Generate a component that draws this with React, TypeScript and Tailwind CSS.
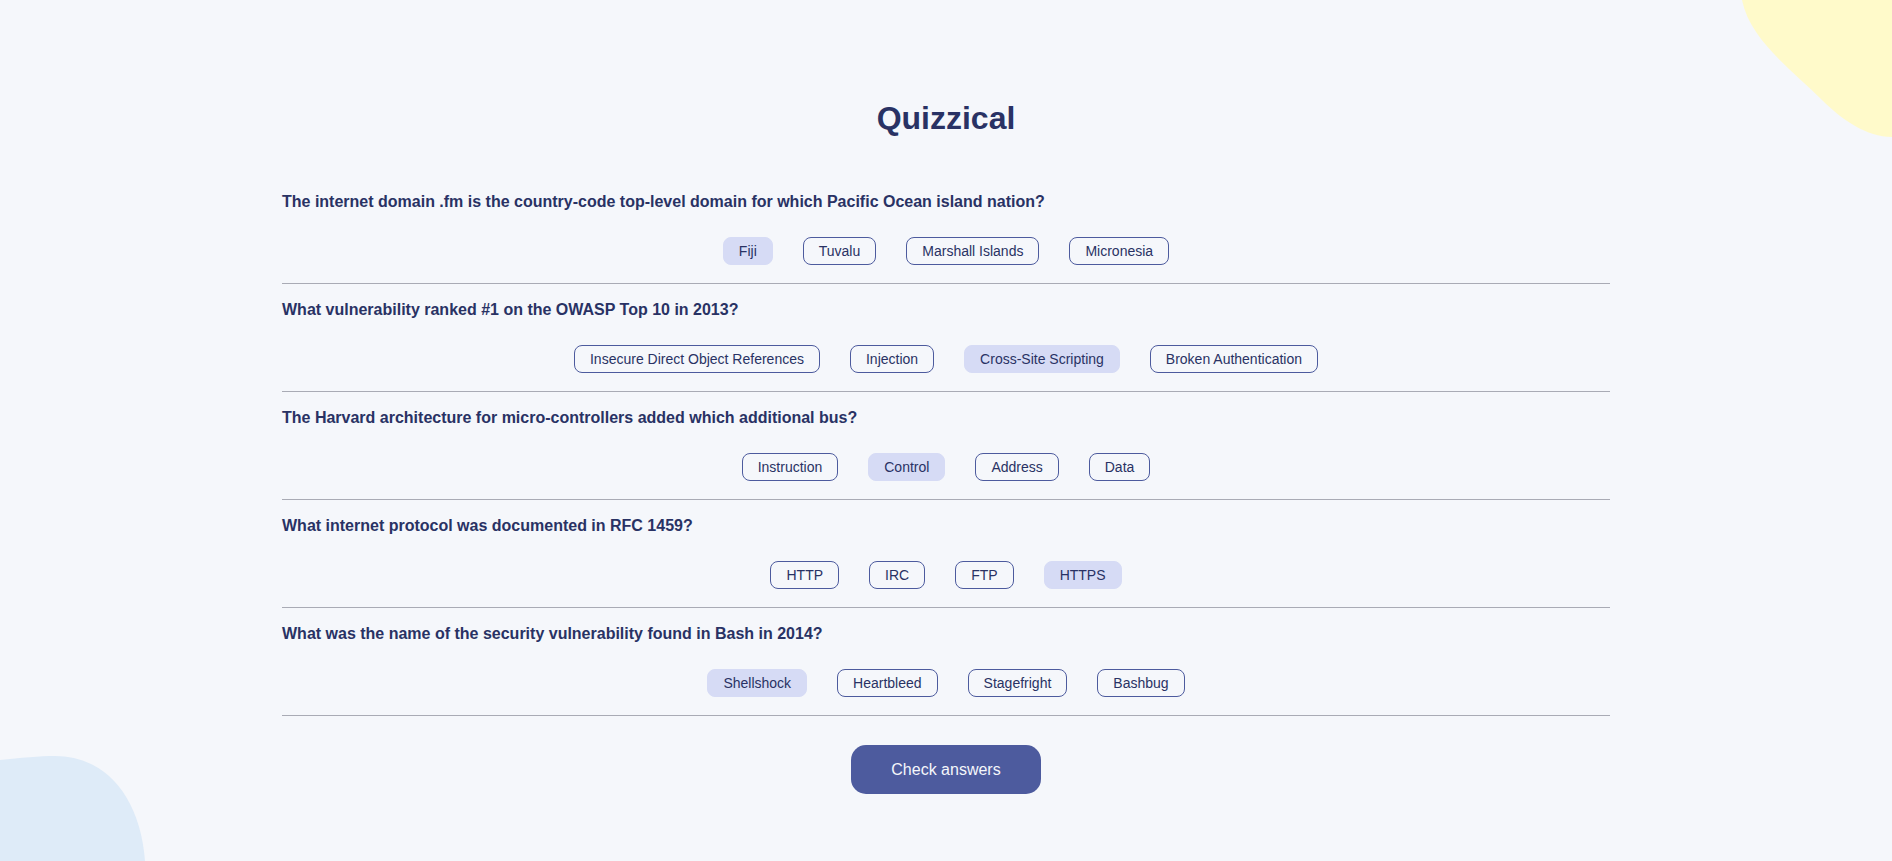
const questions = [
  {
    q: "The internet domain .fm is the country-code top-level domain for which Pacific Ocean island nation?",
    answers: ["Fiji", "Tuvalu", "Marshall Islands", "Micronesia"],
    selected: 0,
  },
  {
    q: "What vulnerability ranked #1 on the OWASP Top 10 in 2013?",
    answers: ["Insecure Direct Object References", "Injection", "Cross-Site Scripting", "Broken Authentication"],
    selected: 2,
  },
  {
    q: "The Harvard architecture for micro-controllers added which additional bus?",
    answers: ["Instruction", "Control", "Address", "Data"],
    selected: 1,
  },
  {
    q: "What internet protocol was documented in RFC 1459?",
    answers: ["HTTP", "IRC", "FTP", "HTTPS"],
    selected: 3,
  },
  {
    q: "What was the name of the security vulnerability found in Bash in 2014?",
    answers: ["Shellshock", "Heartbleed", "Stagefright", "Bashbug"],
    selected: 0,
  },
];

export default function App() {
  return (
    <div
      className="relative min-h-[861px] w-full overflow-hidden bg-[#F5F7FB] text-[#293264]"
      style={{ fontFamily: '"Liberation Sans", Arial, sans-serif' }}
    >
      {/* decorative blobs */}
      <svg className="absolute right-0 top-0" width="150" height="138" viewBox="0 0 150 138">
        <path d="M0 0 C8 40 50 70 80 100 C100 120 125 137 150 137 L150 0 Z" fill="#FFFACA" />
      </svg>
      <svg className="absolute bottom-0 left-0" width="146" height="105" viewBox="0 0 146 105">
        <path d="M0 4 C20 2 40 0 55 0 C105 0 140 40 145 105 L0 105 Z" fill="#DEEBF8" />
      </svg>

      <div className="relative mx-auto flex w-[1328px] flex-col items-center pt-[100px]">
        <h1 className="text-[32px] font-bold leading-[37px]">Quizzical</h1>

        <div className="mt-[56px] w-full">
          {questions.map((item, i) => (
            <div key={i} className={`border-b border-[#A9ABB5] pb-[18px] ${i === 0 ? "pt-0" : "pt-[17px]"}`}>
              <h2 className="text-[16px] font-bold leading-[18px]">{item.q}</h2>
              <div className="mt-[26px] flex justify-center gap-[30px]">
                {item.answers.map((a, j) => (
                  <button
                    key={j}
                    className={
                      j === item.selected
                        ? "h-[28px] rounded-[8px] border border-[#D6DBF5] bg-[#D6DBF5] px-[15px] text-[14px] text-[#293264]"
                        : "h-[28px] rounded-[8px] border border-[#4D5B9E] px-[15px] text-[14px] text-[#293264]"
                    }
                  >
                    {a}
                  </button>
                ))}
              </div>
            </div>
          ))}
        </div>

        <button className="mt-[29px] h-[49px] w-[190px] rounded-[15px] bg-[#4D5B9E] text-[16px] text-[#F5F7FB]">
          Check answers
        </button>
      </div>
    </div>
  );
}
